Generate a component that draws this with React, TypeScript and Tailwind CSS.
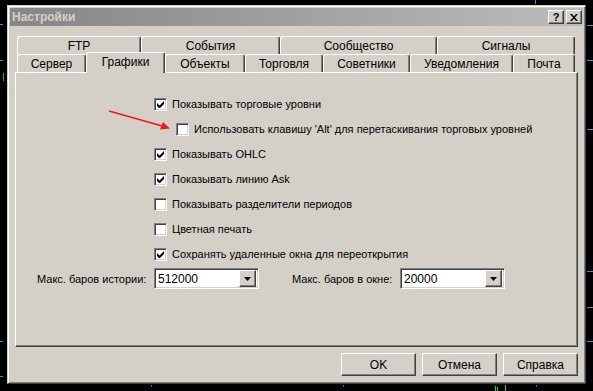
import React from 'react';

const raised = "border border-t-white border-l-white border-r-[#404040] border-b-[#404040] shadow-[inset_-1px_-1px_0_#808080]";
const sunken = "border border-t-[#808080] border-l-[#808080] border-r-white border-b-white shadow-[inset_1px_1px_0_#404040,inset_-1px_-1px_0_#d4d0c8]";

function Tab({ label, w, selected }: { label: string; w: number; selected?: boolean }) {
    return (
        <div
            style={{ width: w }}
            className={
                "flex items-center justify-center rounded-t-[3px] border-t border-l border-r border-t-white border-l-white border-r-[#404040] shadow-[inset_-1px_0_0_#808080] bg-[#d4d0c8] " +
                (selected ? "relative z-10 h-[21px] -mb-[1px] pb-[2px]" : "h-[18px] pt-[1px]")
            }
        >
            {label}
        </div>
    );
}

function Check({ checked }: { checked: boolean }) {
    return (
        <div className={"w-[13px] h-[13px] bg-white shrink-0 flex items-center justify-center " + sunken}>
            {checked && (
                <svg width="7" height="7" viewBox="0 0 7 7">
                    <path d="M0 2v3l2 2h1l4-4V0L2.5 4.5z" fill="#000" />
                </svg>
            )}
        </div>
    );
}

function Row({ label, checked, indent }: { label: string; checked: boolean; indent?: boolean }) {
    return (
        <div className={"h-[25px] flex items-center whitespace-nowrap " + (indent ? "pl-[160px]" : "pl-[138px]")}>
            <Check checked={checked} />
            <span className="ml-[5px]">{label}</span>
        </div>
    );
}

function Combo({ value }: { value: string }) {
    return (
        <div className={"w-[105px] h-[21px] bg-white flex items-center p-[2px] " + sunken}>
            <span className="flex-1 pl-[1px] text-[12px]">{value}</span>
            <div className={"w-[17px] h-[17px] bg-[#d4d0c8] flex items-center justify-center " + raised}>
                <svg width="7" height="4" viewBox="0 0 7 4">
                    <path d="M0 0h7L3.5 4z" fill="#000" />
                </svg>
            </div>
        </div>
    );
}

function Button({ label }: { label: string }) {
    return (
        <div className={"w-[75px] h-[23px] bg-[#d4d0c8] flex items-center justify-center text-[12px] " + raised}>
            {label}
        </div>
    );
}

export default function App() {
    return (
        <div className="relative w-[593px] h-[391px] bg-black overflow-hidden pl-[7px] pt-[5px] text-[11px] text-black font-['Liberation_Sans',Arial,sans-serif]">
            {/* chart leftovers behind the dialog */}
            <span className="absolute left-0 top-[24px] w-[3px] h-px bg-[#808080]" />
            <span className="absolute left-0 top-[60px] w-[3px] h-px bg-[#3a8ee6]" />
            <span className="absolute left-[3px] top-[73px] w-px h-[8px] bg-[#00c000]" />
            <span className="absolute left-0 top-[341px] w-[3px] h-px bg-[#3a8ee6]" />
            <span className="absolute left-0 top-[376px] w-[3px] h-px bg-[#808080]" />
            <span className="absolute left-[535px] top-0 w-px h-[4px] bg-[#3a8ee6]" />
            <span className="absolute right-0 top-[25px] w-[6px] h-px bg-[#808080]" />
            <span className="absolute right-0 top-[60px] w-[6px] h-px bg-[#3a8ee6]" />
            <span className="absolute right-0 top-[129px] w-[5px] h-px bg-[#3a8ee6]" />
            <span className="absolute right-[5px] top-[129px] w-px h-px bg-[#ff2020]" />
            <span className="absolute right-0 top-[271px] w-[6px] h-px bg-[#3a8ee6]" />
            <span className="absolute right-0 top-[307px] w-[6px] h-px bg-[#808080]" />
            <span className="absolute right-0 top-[341px] w-[6px] h-px bg-[#3a8ee6]" />
            <span className="absolute left-[151px] top-[385px] w-px h-[2px] bg-[#3a5ee6]" />
            <span className="absolute left-[343px] top-[385px] w-px h-[2px] bg-[#3a5ee6]" />
            <span className="absolute left-[495px] top-[386px] w-px h-[5px] bg-[#20e020]" />
            <span className="absolute left-[497px] top-[387px] w-px h-[4px] bg-[#20e020]" />
            <span className="absolute left-[505px] top-[385px] w-px h-[6px] bg-[#20e020]" />
            <span className="absolute left-[536px] top-[385px] w-px h-[2px] bg-[#3a5ee6]" />

            <div className="w-[579px] h-[379px] bg-[#d4d0c8] border border-t-[#d4d0c8] border-l-[#d4d0c8] border-r-[#404040] border-b-[#404040] shadow-[inset_1px_1px_0_#fff,inset_-1px_-1px_0_#808080] p-[2px] flex flex-col">
                {/* title bar */}
                <div className="h-[18px] flex items-center justify-between pl-[2px] pr-[1px] bg-gradient-to-r from-[#868686] to-[#bcbcbc]">
                    <span className="font-bold text-[#d4d0c8] text-[12px]">Настройки</span>
                    <div className="flex gap-[2px]">
                        <div className={"w-[16px] h-[14px] bg-[#d4d0c8] flex items-center justify-center font-bold text-[11px] " + raised}>?</div>
                        <div className="w-[16px] h-[14px] bg-[#d4d0c8] flex items-center justify-center border border-t-white border-l-white border-r-[#404040] border-b-[#404040] shadow-[inset_-1px_-1px_0_#808080]">
                            <svg width="8" height="7" viewBox="0 0 8 7">
                                <path d="M0 0h2l2 2.5L6 0h2L5 3.5 8 7H6L4 4.5 2 7H0l3-3.5z" fill="#000" />
                            </svg>
                        </div>
                    </div>
                </div>

                {/* tabs */}
                <div className="mt-[10px] pl-[7px] flex text-[12px]">
                    <Tab label="FTP" w={124} />
                    <Tab label="События" w={139} />
                    <Tab label="Сообщество" w={157} />
                    <Tab label="Сигналы" w={138} />
                </div>
                <div className="pl-[7px] flex items-end h-[18px] text-[12px]">
                    <Tab label="Сервер" w={69} />
                    <Tab label="Графики" w={79} selected />
                    <Tab label="Объекты" w={80} />
                    <Tab label="Торговля" w={78} />
                    <Tab label="Советники" w={87} />
                    <Tab label="Уведомления" w={103} />
                    <Tab label="Почта" w={62} />
                </div>

                {/* panel */}
                <div className="ml-[5px] w-[563px] h-[275px] bg-[#d4d0c8] border border-t-white border-l-white border-r-[#404040] border-b-[#404040] shadow-[inset_-1px_-1px_0_#808080] pt-[19px]">
                    <Row label="Показывать торговые уровни" checked />
                    <Row label="Использовать клавишу 'Alt' для перетаскивания торговых уровней" checked={false} indent />
                    <Row label="Показывать OHLC" checked />
                    <Row label="Показывать линию Ask" checked />
                    <Row label="Показывать разделители периодов" checked={false} />
                    <Row label="Цветная печать" checked={false} />
                    <Row label="Сохранять удаленные окна для переоткрытия" checked />
                    <div className="h-[22px] flex items-end pl-[21px] whitespace-nowrap">
                        <span className="w-[117px] self-center pt-[2px]">Макс. баров истории:</span>
                        <Combo value="512000" />
                        <span className="ml-[33px] w-[108px] self-center pt-[2px]">Макс. баров в окне:</span>
                        <Combo value="20000" />
                    </div>
                </div>

                {/* buttons */}
                <div className="mt-[6px] pr-[5px] flex justify-end gap-[6px]">
                    <Button label="OK" />
                    <Button label="Отмена" />
                    <Button label="Справка" />
                </div>
            </div>

            {/* red arrow */}
            <svg className="absolute left-0 top-0 pointer-events-none" width="593" height="391">
                <line x1="109" y1="111" x2="164" y2="126.5" stroke="#f01818" strokeWidth="1.6" />
                <path d="M170 128.5L160 129.5L163 122z" fill="#f01818" />
            </svg>
        </div>
    );
}
